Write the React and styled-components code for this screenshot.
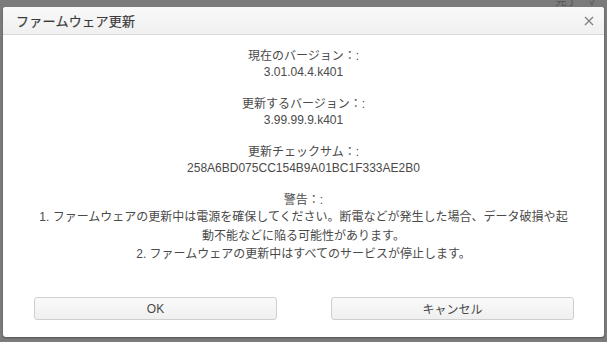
import React from "react";
import styled, { createGlobalStyle } from "styled-components";

const Global = createGlobalStyle`
  html, body { margin: 0; padding: 0; }
  body {
    width: 607px;
    height: 342px;
    overflow: hidden;
    font-family: "Liberation Sans", "Noto Sans CJK JP", sans-serif;
    background: #7a7a7a;
  }
`;

const Overlay = styled.div`
  position: relative;
  width: 607px;
  height: 342px;
  background: #7b7b7b;
  padding: 7px 3px 0 3px;
  box-sizing: border-box;
`;

const BackdropHint = styled.div`
  position: absolute;
  top: -5px;
  right: 10px;
  font-size: 11px;
  line-height: 12px;
  color: #555;
  display: flex;
  gap: 12px;
  align-items: center;
`;

const Dialog = styled.div`
  width: 601px;
  height: 330px;
  background: #fff;
  border-radius: 3px;
  box-shadow: 0 1px 2px rgba(0,0,0,0.35);
  display: flex;
  flex-direction: column;
  overflow: hidden;
`;

const Header = styled.div`
  height: 28px;
  box-sizing: border-box;
  display: flex;
  align-items: center;
  justify-content: space-between;
  padding: 0 10px 0 13px;
  background: linear-gradient(#f9f9f9, #f0f0f0);
  border-bottom: 1px solid #d9d9d9;
`;

const Title = styled.div`
  font-size: 13px;
  color: #3a3a3a;
  letter-spacing: 0.3px;
  -webkit-text-stroke: 0.2px #3a3a3a;
`;

const Close = styled.button`
  border: none;
  background: none;
  padding: 0;
  width: 10px;
  height: 10px;
  display: flex;
  cursor: pointer;
`;

const Body = styled.div`
  padding: 13px 35px 0;
  text-align: center;
  font-size: 12px;
  color: #4a4a4a;
  line-height: 16px;
`;

const Section = styled.div`
  margin-bottom: 16px;
`;

const Warning = styled.div`
  line-height: 18.5px;
`;

const Footer = styled.div`
  margin-top: auto;
  padding: 0 30px 17px 31px;
  display: flex;
  gap: 54px;
`;

const Button = styled.button`
  flex: 1;
  height: 23px;
  border: 1px solid #cfcfcf;
  border-radius: 3px;
  background: linear-gradient(#fafafa, #efefef);
  font-family: "Liberation Sans", "Noto Sans CJK JP", sans-serif;
  font-size: 12px;
  color: #4a4a4a;
  padding: 0;
`;

export default function App() {
  return (
    <>
      <Global />
      <Overlay>
        <BackdropHint>
          <span>完了</span>
          <span>✓</span>
        </BackdropHint>
        <Dialog>
          <Header>
            <Title>ファームウェア更新</Title>
            <Close aria-label="close">
              <svg width="10" height="10" viewBox="0 0 10 10">
                <path d="M1 1L9 9M9 1L1 9" stroke="#808080" strokeWidth="1.3" />
              </svg>
            </Close>
          </Header>
          <Body>
            <Section>
              <div>現在のバージョン：:</div>
              <div>3.01.04.4.k401</div>
            </Section>
            <Section>
              <div>更新するバージョン：:</div>
              <div>3.99.99.9.k401</div>
            </Section>
            <Section>
              <div>更新チェックサム：:</div>
              <div>258A6BD075CC154B9A01BC1F333AE2B0</div>
            </Section>
            <div>警告：:</div>
            <Warning>
              <div>1. ファームウェアの更新中は電源を確保してください。断電などが発生した場合、データ破損や起動不能などに陥る可能性があります。</div>
              <div>2. ファームウェアの更新中はすべてのサービスが停止します。</div>
            </Warning>
          </Body>
          <Footer>
            <Button>OK</Button>
            <Button>キャンセル</Button>
          </Footer>
        </Dialog>
      </Overlay>
    </>
  );
}
